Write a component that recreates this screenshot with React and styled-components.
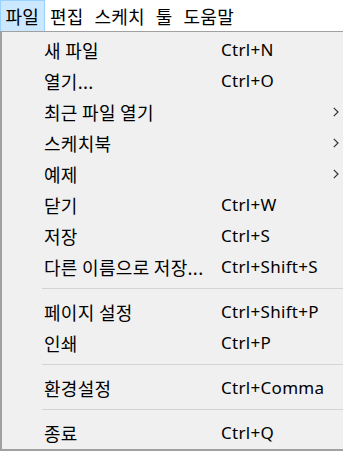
import React from "react";
import styled, { createGlobalStyle } from "styled-components";

const Global = createGlobalStyle`
  html, body { margin: 0; padding: 0; background: #ffffff; }
  body {
    font-family: "Noto Sans", "Noto Sans CJK KR", sans-serif;
    color: #000;
  }
`;

const Page = styled.div`
  width: 343px;
  height: 451px;
  overflow: hidden;
  display: flex;
  flex-direction: column;
  background: #fff;
`;

const MenuBar = styled.div`
  display: flex;
  align-items: stretch;
  height: 31px;
  background: #fff;
`;

const BarItem = styled.div`
  display: flex;
  align-items: center;
  padding: 0 4.5px;
  box-sizing: border-box;
  font-family: "Noto Sans CJK KR", sans-serif;
  font-size: 18px;
  letter-spacing: 0.2px;
  line-height: 1;
  background: ${(p) => (p.$active ? "#cce8ff" : "transparent")};
  border: 1px solid ${(p) => (p.$active ? "#99d1ff" : "transparent")};
  border-bottom: none;
`;

const Panel = styled.div`
  flex: 1;
  background: #f0f0f0;
  border-top: 1px solid #a0a0a0;
  border-left: 2px solid #a0a0a0;
  border-bottom: 2px solid #a0a0a0;
  padding: 2px 0 1px 0;
  display: flex;
  flex-direction: column;
`;

const Row = styled.div`
  display: grid;
  grid-template-columns: 177px 1fr 20px;
  align-items: center;
  height: 31px;
  padding-left: 42px;
`;

const Label = styled.span`
  font-family: "Noto Sans CJK KR", sans-serif;
  font-size: 18px;
  letter-spacing: 0.3px;
  white-space: nowrap;
  line-height: 1;
`;

const Shortcut = styled.span`
  font-family: "Noto Sans", sans-serif;
  font-size: 17px;
  letter-spacing: 0.3px;
  white-space: nowrap;
  line-height: 1;
`;

const Arrow = styled.span`
  display: flex;
  align-items: center;
  padding-left: 10px;
`;

const Separator = styled.div`
  height: 14px;
  display: flex;
  align-items: flex-start;
  padding-left: 40px;
  &::after {
    content: "";
    display: block;
    margin-top: 6px;
    width: 100%;
    height: 1px;
    background: #d4d4d4;
  }
`;

const Chevron = () => (
  <svg width="6" height="10" viewBox="0 0 6 10">
    <polyline points="0.8,0.8 5,5 0.8,9.2" fill="none" stroke="#333" strokeWidth="1.2" />
  </svg>
);

const items = [
  { label: "새 파일", sc: "Ctrl+N" },
  { label: "열기...", sc: "Ctrl+O" },
  { label: "최근 파일 열기", sub: true },
  { label: "스케치북", sub: true },
  { label: "예제", sub: true },
  { label: "닫기", sc: "Ctrl+W" },
  { label: "저장", sc: "Ctrl+S" },
  { label: "다른 이름으로 저장...", sc: "Ctrl+Shift+S" },
  { sep: true },
  { label: "페이지 설정", sc: "Ctrl+Shift+P" },
  { label: "인쇄", sc: "Ctrl+P" },
  { sep: true },
  { label: "환경설정", sc: "Ctrl+Comma" },
  { sep: true },
  { label: "종료", sc: "Ctrl+Q" },
];

export default function App() {
  return (
    <Page>
      <Global />
      <MenuBar>
        <BarItem $active>파일</BarItem>
        <BarItem>편집</BarItem>
        <BarItem>스케치</BarItem>
        <BarItem>툴</BarItem>
        <BarItem>도움말</BarItem>
      </MenuBar>
      <Panel>
        {items.map((it, i) =>
          it.sep ? (
            <Separator key={i} />
          ) : (
            <Row key={i}>
              <Label>{it.label}</Label>
              <Shortcut>{it.sc || ""}</Shortcut>
              <Arrow>{it.sub ? <Chevron /> : null}</Arrow>
            </Row>
          )
        )}
      </Panel>
    </Page>
  );
}
